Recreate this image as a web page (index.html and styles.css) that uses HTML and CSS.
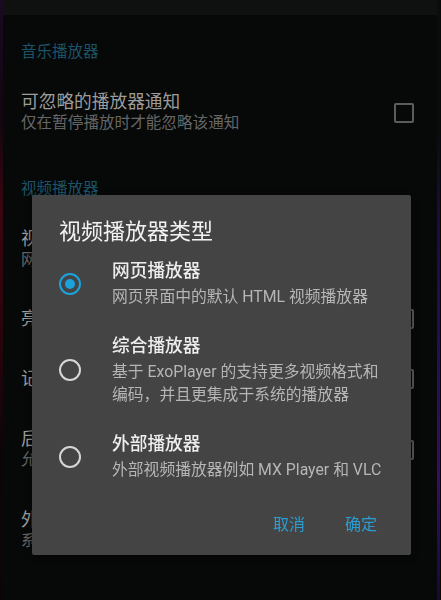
FILE: index.html
```html
<!DOCTYPE html>
<html lang="zh-CN">
<head>
<meta charset="utf-8">
<title>视频播放器类型</title>
<link rel="stylesheet" href="styles.css">
</head>
<body>
<div class="screen">
  <div class="edge edge-left"></div>
  <div class="app">
    <div class="topbar"></div>
    <div class="list">
      <div class="section-header">音乐播放器</div>
      <div class="item">
        <div class="item-text">
          <div class="item-title">可忽略的播放器通知</div>
          <div class="item-sub">仅在暂停播放时才能忽略该通知</div>
        </div>
        <div class="checkbox"></div>
      </div>
      <div class="section-header">视频播放器</div>
      <div class="item">
        <div class="item-text">
          <div class="item-title">视频播放器类型</div>
          <div class="item-sub">网页播放器</div>
        </div>
      </div>
      <div class="item">
        <div class="item-text">
          <div class="item-title">亮度和音量手势</div>
        </div>
        <div class="checkbox"></div>
      </div>
      <div class="item">
        <div class="item-text">
          <div class="item-title">记住播放位置</div>
        </div>
        <div class="checkbox"></div>
      </div>
      <div class="item">
        <div class="item-text">
          <div class="item-title">后台播放</div>
          <div class="item-sub">允许在后台继续播放视频</div>
        </div>
        <div class="checkbox"></div>
      </div>
      <div class="item">
        <div class="item-text">
          <div class="item-title">外部播放器</div>
          <div class="item-sub">系统默认播放器</div>
        </div>
      </div>
    </div>
  </div>
  <div class="edge edge-right"></div>
</div>

<div class="scrim">
  <div class="dialog">
    <div class="dialog-title">视频播放器类型</div>
    <div class="option">
      <div class="radio-cell"><span class="radio selected"></span></div>
      <div class="option-text">
        <div class="option-title">网页播放器</div>
        <div class="option-sub">网页界面中的默认 HTML 视频播放器</div>
      </div>
    </div>
    <div class="option">
      <div class="radio-cell"><span class="radio"></span></div>
      <div class="option-text">
        <div class="option-title">综合播放器</div>
        <div class="option-sub">基于 ExoPlayer 的支持更多视频格式和编码，并且更集成于系统的播放器</div>
      </div>
    </div>
    <div class="option">
      <div class="radio-cell"><span class="radio"></span></div>
      <div class="option-text">
        <div class="option-title">外部播放器</div>
        <div class="option-sub">外部视频播放器例如 MX Player 和 VLC</div>
      </div>
    </div>
    <div class="actions">
      <span class="btn">取消</span>
      <span class="btn">确定</span>
    </div>
  </div>
</div>
</body>
</html>
```

FILE: styles.css
```css
html, body {
  margin: 0;
  padding: 0;
}

body {
  width: 441px;
  height: 600px;
  overflow: hidden;
  background: #070908;
  font-family: Roboto, "Noto Sans CJK SC", sans-serif;
}

.screen {
  display: flex;
  width: 441px;
  height: 600px;
}

.edge {
  width: 3px;
  flex: none;
}

.edge-left {
  background: linear-gradient(180deg, #1a0a22 0%, #12060f 20%, #3a0610 35%, #2a040c 55%, #0c0508 75%, #0a0608 100%);
}

.edge-right {
  margin-right: 1px;
  background: linear-gradient(180deg, #0c0a12 0%, #0b0a10 22%, #1c0c38 35%, #2a0c56 60%, #3a0c66 80%, #1a0830 100%);
}

.app {
  flex: 1;
  display: flex;
  flex-direction: column;
}

.topbar {
  height: 15px;
  background: #0f1110;
  flex: none;
}

.list {
  display: flex;
  flex-direction: column;
}

.section-header {
  padding: 27px 18px 11px;
  font-size: 15.5px;
  line-height: 20px;
  color: #1c5369;
}

.item {
  display: flex;
  align-items: center;
  padding: 18px 23px 18px 18px;
}

.item + .item {
  padding-top: 19px;
  padding-bottom: 19px;
}

.item-text {
  flex: 1;
}

.item-title {
  font-size: 17.7px;
  line-height: 22px;
  color: #9c9c9c;
}

.item-sub {
  font-size: 15.6px;
  line-height: 21px;
  color: #666;
}

.checkbox {
  width: 20px;
  height: 20px;
  box-sizing: border-box;
  border: 2px solid #5c5c5c;
  border-radius: 2px;
  flex: none;
}

.scrim {
  position: fixed;
  inset: 0;
  padding: 195px 0 0 32px;
  box-sizing: border-box;
}

.dialog {
  width: 379px;
  background: #434443;
  border-radius: 2px;
  box-shadow: 0 2px 6px rgba(0, 0, 0, 0.6);
  padding-top: 23px;
}

.dialog-title {
  padding-left: 27px;
  font-size: 22px;
  line-height: 28px;
  color: #f2f2f2;
  margin-bottom: 1px;
}

.option {
  display: flex;
  align-items: center;
  padding: 12px 24px 14px 0;
}

.radio-cell {
  width: 80px;
  flex: none;
  display: flex;
  padding-left: 27px;
  box-sizing: border-box;
}

.radio {
  width: 22px;
  height: 22px;
  box-sizing: border-box;
  border: 2.5px solid #d6d6d6;
  border-radius: 50%;
  display: flex;
  align-items: center;
  justify-content: center;
}

.radio.selected {
  border-color: #1ba2dc;
}

.radio.selected::after {
  content: "";
  width: 10px;
  height: 10px;
  border-radius: 50%;
  background: #1ba2dc;
}

.option-text {
  flex: 1;
}

.option-title {
  font-size: 17.7px;
  line-height: 24px;
  color: #eeeeee;
  font-weight: 500;
}

.option-sub {
  margin-top: 2px;
  font-size: 15.8px;
  line-height: 23px;
  color: #b6b6b6;
}

.actions {
  display: flex;
  justify-content: flex-end;
  gap: 24px;
  padding: 12px 26px 12px 0;
}

.btn {
  height: 36px;
  line-height: 36px;
  padding: 0 8px;
  font-size: 16px;
  color: #2a9ed4;
}
```
